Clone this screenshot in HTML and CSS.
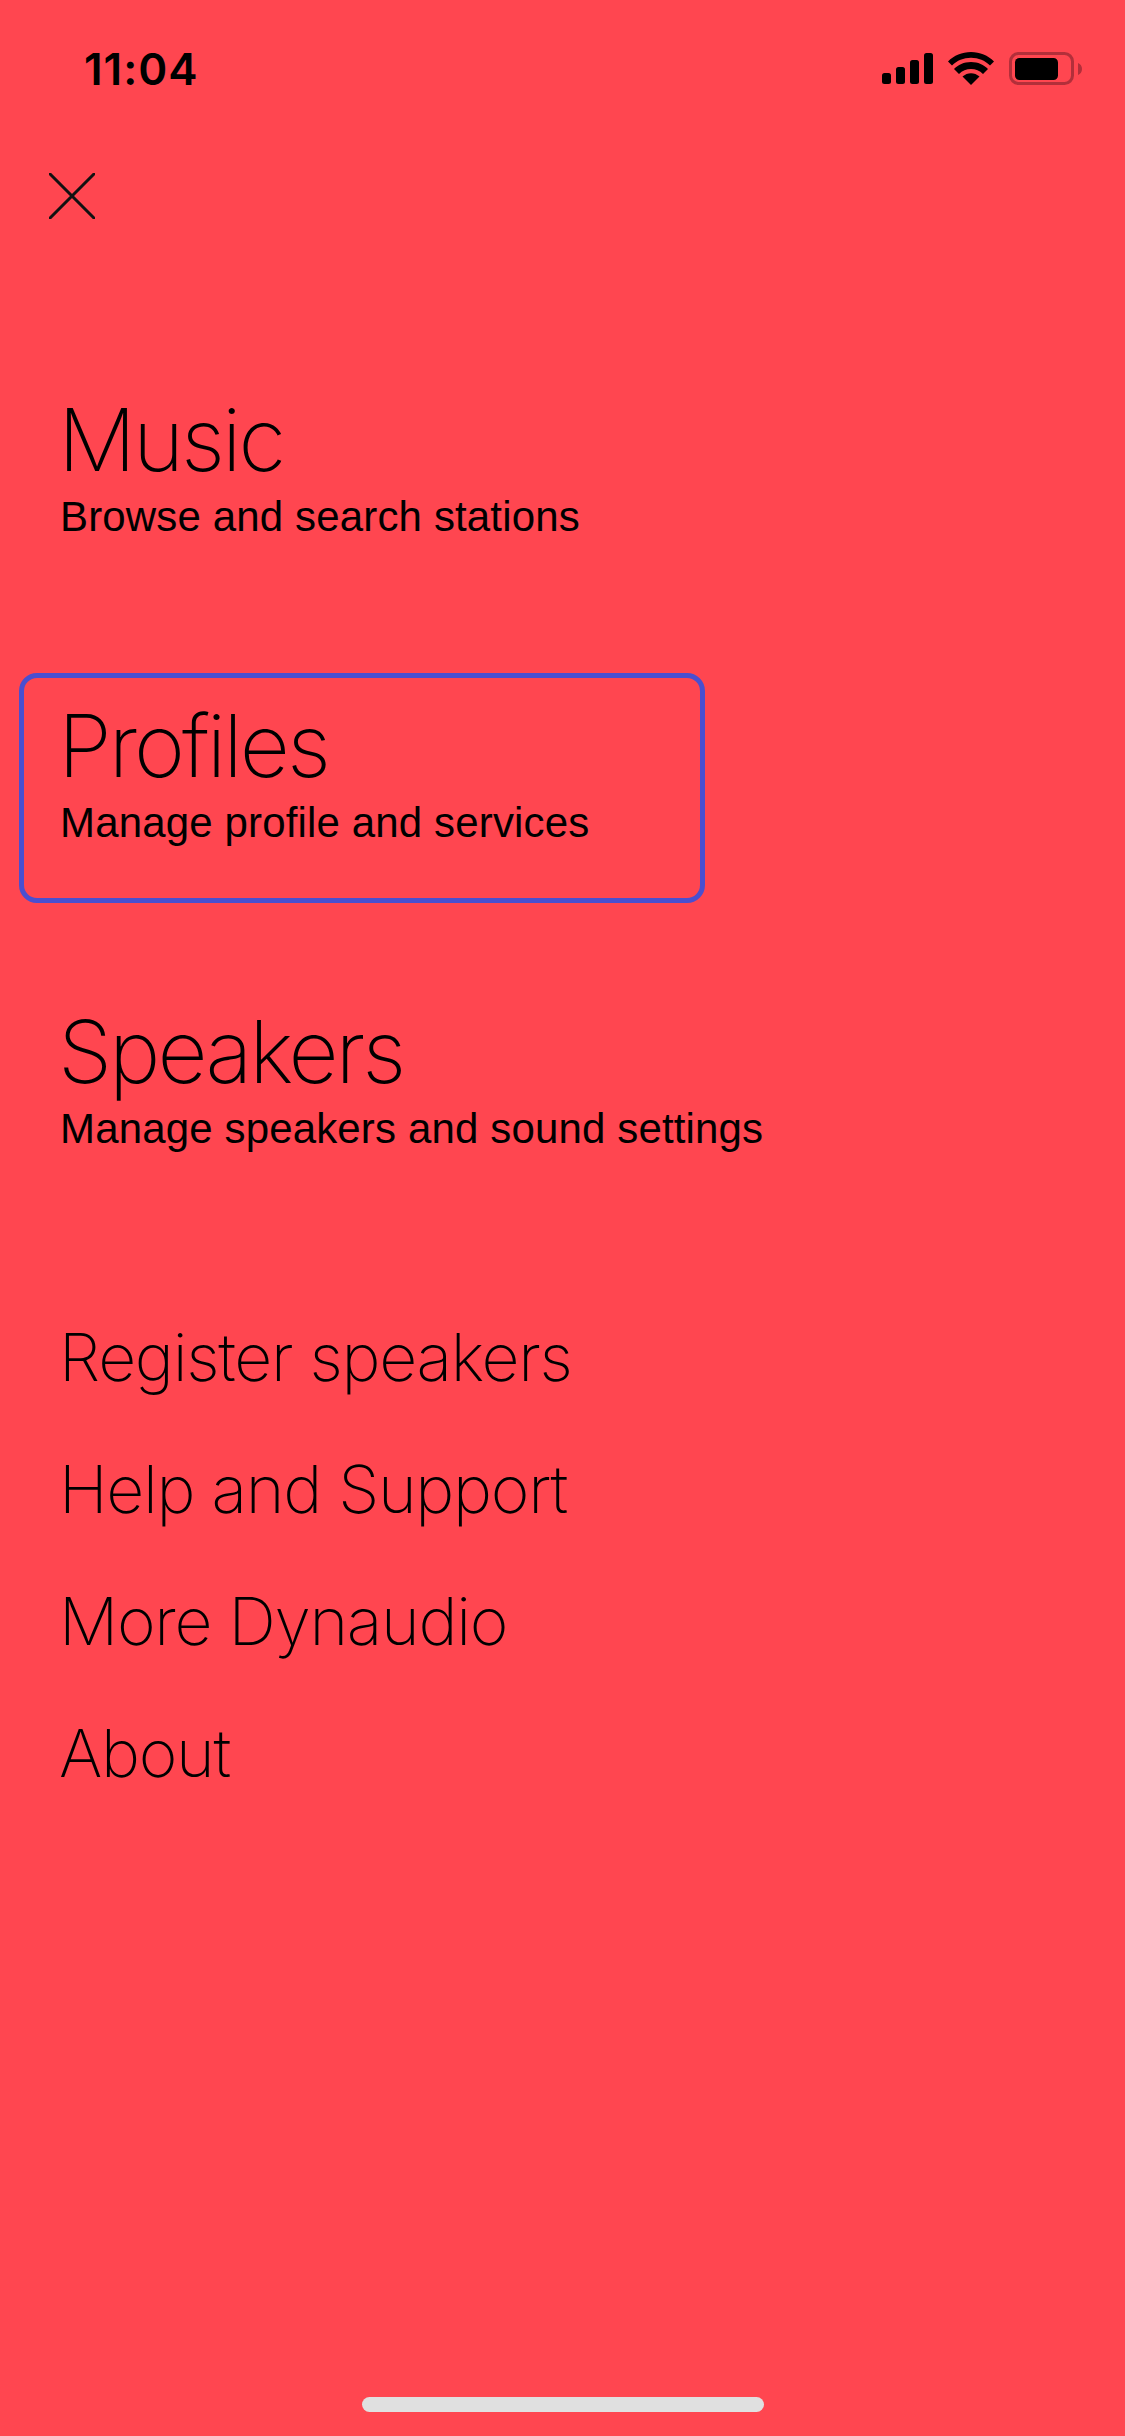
FILE: index.html
```html
<html>
<head>
<title>Menu</title>
<link rel="stylesheet" href="styles.css">
</head>
<body>
    <div class="status">
        <div class="time">11:04</div>
        <div class="status-icons">
            <svg class="signal" width="51" height="31" viewBox="0 0 51 31">
                <rect x="0" y="20" width="9" height="11" rx="2.5"/>
                <rect x="14" y="14" width="9" height="17" rx="2.5"/>
                <rect x="28" y="7" width="9" height="24" rx="2.5"/>
                <rect x="42" y="0" width="9" height="31" rx="2.5"/>
            </svg>
            <svg class="wifi" width="46" height="33" viewBox="0 0 46 33">
                <path d="M23 33 L14.5 24.5 C19.5 20 26.500 20 31.500 24.500 Z"/>
                <path d="M23 11 C30 11 36 13.800 40 18 L35 23 C31.800 19.800 27.500 18 23 18 C18.500 18 14.200 19.800 11 23 L6 18 C10 13.800 16 11 23 11 Z" transform="translate(0 -1)"/>
                <path d="M23 0 C32 0 40 3.500 46 9.500 L42 13.500 C37 8.600 30.500 5.800 23 5.800 C15.500 5.800 9 8.600 4 13.500 L0 9.500 C6 3.500 14 0 23 0 Z"/>
            </svg>
            <svg class="battery" width="73" height="33" viewBox="0 0 73 33">
                <rect x="1.500" y="1.500" width="62" height="30" rx="8" fill="none" stroke="#b32f3a" stroke-width="3"/>
                <rect x="6" y="6" width="43" height="22" rx="4.500"/>
                <path d="M69 11 C71.500 12 73 14 73 17 C73 20 71.500 22 69 23 Z" fill="#b32f3a"/>
            </svg>
        </div>
    </div>

    <div class="close">
        <svg width="46" height="46" viewBox="0 0 46 46">
            <path d="M1 1 L45 45 M45 1 L1 45" stroke="#111" stroke-width="3" stroke-linecap="round"/>
        </svg>
    </div>

    <div class="menu">
        <div class="item">
            <div class="title">Music</div>
            <div class="sub">Browse and search stations</div>
        </div>
        <div class="item focused">
            <div class="title">Profiles</div>
            <div class="sub">Manage profile and services</div>
        </div>
        <div class="item">
            <div class="title">Speakers</div>
            <div class="sub">Manage speakers and sound settings</div>
        </div>
    </div>

    <div class="links">
        <div class="link">Register speakers</div>
        <div class="link">Help and Support</div>
        <div class="link">More Dynaudio</div>
        <div class="link">About</div>
    </div>

    <div class="home-bar"></div>
</body>
</html>
```

FILE: styles.css
```css
html, body {
  margin: 0;
  height: 2436px;
}

body {
  background: #ff4650;
  color: #000;
  font-family: "Inter", "Liberation Sans", sans-serif;
  overflow: hidden;
  display: flex;
  flex-direction: column;
}

.status {
  height: 138px;
  padding: 52px 43px 0 84px;
  box-sizing: border-box;
  display: flex;
  justify-content: space-between;
  align-items: flex-start;
  flex-shrink: 0;
}

.time {
  font-size: 44px;
  font-weight: 600;
  line-height: 34px;
  letter-spacing: 1px;
}

.status-icons {
  display: flex;
  align-items: flex-start;
  gap: 15px;
}

.signal {
  margin-top: 1px;
}

.close {
  height: 46px;
  padding: 35px 0 0 49px;
  flex-shrink: 0;
}

.close svg {
  display: block;
}

.menu {
  margin: 148px 0 0 19px;
  display: flex;
  flex-direction: column;
  gap: 76px;
}

.item {
  width: 686px;
  height: 230px;
  box-sizing: border-box;
  border: 5px solid transparent;
  border-radius: 18px;
  padding-left: 36px;
  white-space: nowrap;
}

.focused {
  border-color: #4a4fd0;
}

.title {
  font-size: 87px;
  font-weight: 200;
  line-height: 100px;
  letter-spacing: -3px;
  padding-top: 18px;
  margin-left: -2px;
}

.sub {
  font-family: "Liberation Sans", sans-serif;
  font-size: 42px;
  line-height: 50px;
  letter-spacing: 0.150px;
  margin-top: 2px;
}

.links {
  margin: 82px 0 0 59px;
}

.link {
  font-size: 66px;
  font-weight: 200;
  line-height: 132px;
  letter-spacing: -1.300px;
}

.home-bar {
  position: absolute;
  left: 362px;
  top: 2397px;
  width: 402px;
  height: 15px;
  border-radius: 8px;
  background: #e0e0e0;
}
```
